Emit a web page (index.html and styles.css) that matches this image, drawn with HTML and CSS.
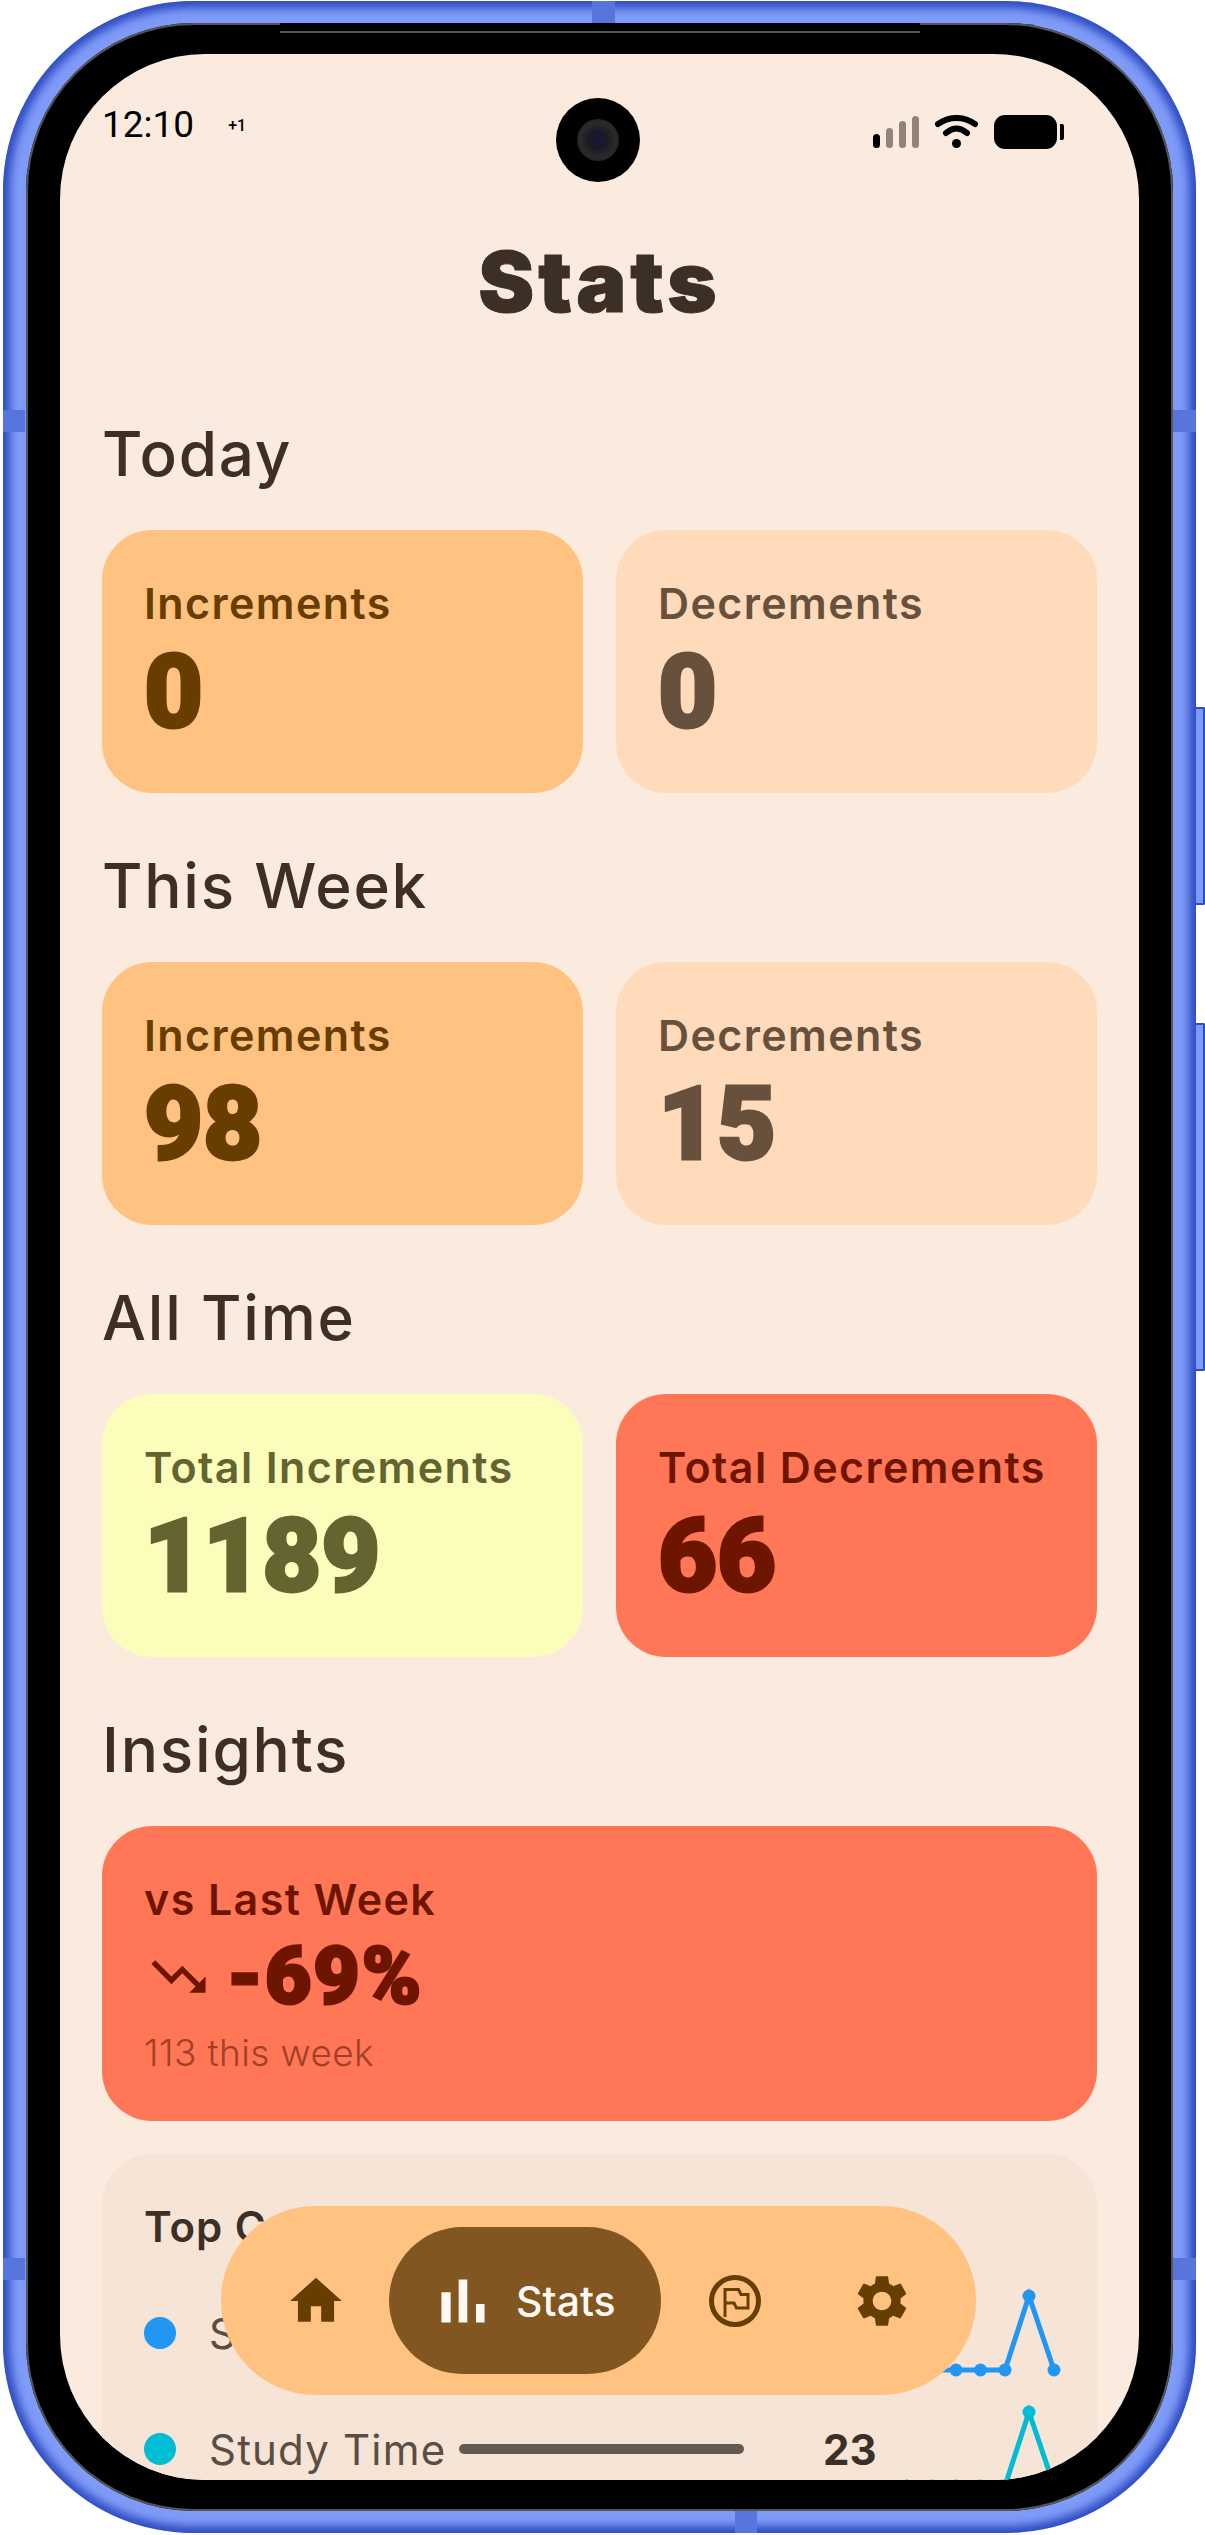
FILE: index.html
```html
<!DOCTYPE html>
<html lang="en">
<head>
    <meta charset="UTF-8">
    <title>Stats</title>
    <link rel="stylesheet" href="styles.css">
</head>
<body>

    <div class="phone">
        <div class="side-btn side-btn-one"></div>
        <div class="side-btn side-btn-two"></div>
        <div class="seam seam-top"></div>
        <div class="seam seam-bottom"></div>
        <div class="seam seam-left-a"></div>
        <div class="seam seam-right-a"></div>
        <div class="seam seam-left-b"></div>
        <div class="seam seam-right-b"></div>

        <div class="bezel">
            <div class="notch"></div>
            <div class="screen">
                <div class="camera"><div class="lens"></div></div>

                <div class="status-bar">
                    <div class="status-left">
                        <span class="clock">12:10</span>
                        <span class="plus-one">+1</span>
                    </div>
                    <div class="status-right">
                        <div class="signal">
                            <span class="sig sig-1"></span>
                            <span class="sig sig-2"></span>
                            <span class="sig sig-3"></span>
                            <span class="sig sig-4"></span>
                        </div>
                        <svg class="wifi" viewBox="0 0 43 33" width="43" height="33">
                            <path d="M3 9 Q21.5 -3 40 9" fill="none" stroke="#000" stroke-width="6" stroke-linecap="round"/>
                            <path d="M11 18 Q21.5 9 32 18" fill="none" stroke="#000" stroke-width="6" stroke-linecap="round"/>
                            <circle cx="21.5" cy="28.5" r="4.5" fill="#000"/>
                        </svg>
                        <div class="battery"><div class="battery-tip"></div></div>
                    </div>
                </div>

                <h1 class="page-title">Stats</h1>

                <h2 class="section-title section-first">Today</h2>
                <div class="card-row">
                    <div class="card card-inc">
                        <div class="card-label">Increments</div>
                        <div class="card-value">0</div>
                    </div>
                    <div class="card card-dec">
                        <div class="card-label">Decrements</div>
                        <div class="card-value">0</div>
                    </div>
                </div>

                <h2 class="section-title">This Week</h2>
                <div class="card-row">
                    <div class="card card-inc">
                        <div class="card-label">Increments</div>
                        <div class="card-value">98</div>
                    </div>
                    <div class="card card-dec">
                        <div class="card-label">Decrements</div>
                        <div class="card-value">15</div>
                    </div>
                </div>

                <h2 class="section-title">All Time</h2>
                <div class="card-row">
                    <div class="card card-total-inc">
                        <div class="card-label">Total Increments</div>
                        <div class="card-value">1189</div>
                    </div>
                    <div class="card card-red">
                        <div class="card-label">Total Decrements</div>
                        <div class="card-value">66</div>
                    </div>
                </div>

                <h2 class="section-title">Insights</h2>
                <div class="card card-red card-wide">
                    <div class="card-label">vs Last Week</div>
                    <div class="trend-row">
                        <svg class="trend-icon" viewBox="0 0 24 24" width="65" height="65">
                            <path d="M16 18l2.29-2.29-4.88-4.88-4 4L2 7.41 3.41 6l6 6 4-4 6.3 6.29L22 12v6z"/>
                        </svg>
                        <span class="trend-value">-69%</span>
                    </div>
                    <div class="trend-note">113 this week</div>
                </div>

                <div class="top-card">
                    <div class="top-title">Top Counters</div>

                    <div class="top-row">
                        <span class="dot dot-blue"></span>
                        <span class="top-name">Steps</span>
                        <span class="top-bar"></span>
                        <span class="top-count">64</span>
                        <svg class="spark spark-blue" viewBox="0 0 170 96" width="170" height="96">
                            <polyline points="12,85 36.5,85 61,85 85.5,85 110,85 134,11 159,85"/>
                            <circle cx="12" cy="85" r="6.5"/><circle cx="36.5" cy="85" r="6.5"/><circle cx="61" cy="85" r="6.5"/><circle cx="85.5" cy="85" r="6.5"/><circle cx="110" cy="85" r="6.5"/><circle cx="134" cy="11" r="6.5"/><circle cx="159" cy="85" r="6.5"/>
                        </svg>
                    </div>

                    <div class="top-row">
                        <span class="dot dot-cyan"></span>
                        <span class="top-name">Study Time</span>
                        <span class="top-bar"></span>
                        <span class="top-count">23</span>
                        <svg class="spark spark-cyan" viewBox="0 0 170 96" width="170" height="96">
                            <polyline points="12,85 36.5,85 61,85 85.5,85 110,85 134,11 159,85"/>
                            <circle cx="12" cy="85" r="6.5"/><circle cx="36.5" cy="85" r="6.5"/><circle cx="61" cy="85" r="6.5"/><circle cx="85.5" cy="85" r="6.5"/><circle cx="110" cy="85" r="6.5"/><circle cx="134" cy="11" r="6.5"/><circle cx="159" cy="85" r="6.5"/>
                        </svg>
                    </div>
                </div>

                <div class="nav-pill">
                    <svg class="nav-icon nav-home" viewBox="0 0 24 24" width="62" height="62">
                        <path d="M10 20v-6h4v6h5v-8h3L12 3 2 12h3v8z"/>
                    </svg>
                    <div class="nav-active">
                        <svg class="nav-bars" viewBox="0 0 24 24" width="74" height="74">
                            <path d="M5 9.2h3V19H5zM10.6 5h2.8v14h-2.8zM16.2 13H19v6h-2.8z"/>
                        </svg>
                        <span class="nav-label">Stats</span>
                    </div>
                    <svg class="nav-flag" viewBox="0 0 52 52" width="52" height="52">
                        <circle cx="26" cy="26" r="23.5"/>
                        <path d="M16 42V14.500H29.500L32 19.500H39V33H27.500L25 28H16"/>
                    </svg>
                    <svg class="nav-icon nav-gear" viewBox="0 0 24 24" width="62" height="62">
                        <path d="M19.14 12.94c.04-.3.06-.61.06-.94 0-.32-.02-.64-.07-.94l2.03-1.58c.18-.14.23-.41.12-.61l-1.92-3.32c-.12-.22-.37-.29-.59-.22l-2.39.96c-.5-.38-1.03-.7-1.62-.94l-.36-2.54c-.04-.24-.24-.41-.48-.41h-3.84c-.24 0-.43.17-.47.41l-.36 2.54c-.59.24-1.13.57-1.62.94l-2.39-.96c-.22-.08-.47 0-.59.22L2.74 8.87c-.12.21-.08.47.12.61l2.03 1.58c-.05.3-.09.63-.09.94s.02.64.07.94l-2.03 1.58c-.18.14-.23.41-.12.61l1.92 3.32c.12.22.37.29.59.22l2.39-.96c.5.38 1.03.7 1.62.94l.36 2.54c.05.24.24.41.48.41h3.84c.24 0 .44-.17.47-.41l.36-2.54c.59-.24 1.13-.56 1.62-.94l2.39.96c.22.08.47 0 .59-.22l1.92-3.32c.12-.22.07-.47-.12-.61l-2.01-1.58zM12 15.6c-1.98 0-3.6-1.62-3.6-3.6s1.62-3.6 3.6-3.6 3.6 1.62 3.6 3.6-1.62 3.6-3.6 3.6z"/>
                    </svg>
                </div>
            </div>
        </div>
    </div>

</body>
</html>
```

FILE: styles.css
```css
html, body {
    margin: 0;
    height: 2535px;
    overflow: hidden;
    background: #fff;
}

body {
    font-family: "Inter", "Liberation Sans", sans-serif;
    color: #3b2f26;
    padding: 1px 0 0 3px;
    box-sizing: border-box;
}

/* device frame */
.phone {
    position: relative;
    width: 1193px;
    height: 2532px;
    box-sizing: border-box;
    padding: 22px 23px;
    border-radius: 190px;
    background: #7f9bf8;
    box-shadow: inset 0 0 9px 7px #2f4dc2;
}

.bezel {
    position: relative;
    height: 100%;
    box-sizing: border-box;
    padding: 31px 34px;
    border-radius: 168px;
    background: #000;
    box-shadow: inset 0 0 0 2px #555;
}

.notch {
    position: absolute;
    top: 0;
    left: 254px;
    width: 640px;
    height: 8px;
    background: #000;
    border-bottom: 2px solid #555;
}

.side-btn {
    position: absolute;
    left: 1193px;
    width: 9px;
    background: #7f9bf8;
    border: 2px solid #2f4dc2;
    border-left: none;
    box-sizing: border-box;
    border-radius: 0 2px 2px 0;
}

.side-btn-one {
    top: 706px;
    height: 198px;
}

.side-btn-two {
    top: 1022px;
    height: 348px;
}

.seam {
    position: absolute;
    background: #5775dc;
}

.seam-top {
    top: 0;
    left: 589px;
    width: 23px;
    height: 22px;
}

.seam-bottom {
    bottom: 0;
    left: 732px;
    width: 22px;
    height: 22px;
}

.seam-left-a, .seam-left-b {
    left: 0;
    width: 22px;
    height: 22px;
}

.seam-right-a, .seam-right-b {
    right: 0;
    width: 23px;
    height: 22px;
}

.seam-left-a, .seam-right-a {
    top: 409px;
}

.seam-left-b, .seam-right-b {
    top: 2257px;
}

/* screen */
.screen {
    position: relative;
    height: 100%;
    overflow: hidden;
    box-sizing: border-box;
    padding: 50px 42px 0;
    border-radius: 145px;
    background: #fbebdf;
}

.camera {
    position: absolute;
    top: 44px;
    left: 496px;
    width: 84px;
    height: 84px;
    border-radius: 50%;
    background: #000;
    display: flex;
    align-items: center;
    justify-content: center;
}

.lens {
    width: 42px;
    height: 42px;
    border-radius: 50%;
    background: radial-gradient(circle, #14163f 0%, #1a1a26 30%, #2b2b2b 60%, #111 100%);
}

.status-bar {
    display: flex;
    justify-content: space-between;
    align-items: center;
    height: 42px;
}

.status-left {
    display: flex;
    align-items: center;
    gap: 34px;
}

.clock {
    font-family: Roboto, sans-serif;
    font-size: 37px;
    color: #000;
    line-height: 42px;
}

.plus-one {
    font-family: Roboto, sans-serif;
    font-size: 16px;
    font-weight: 500;
    color: #000;
}

.status-right {
    display: flex;
    align-items: flex-end;
    margin-right: 40px;
    margin-top: 12px;
}

.signal {
    display: flex;
    align-items: flex-end;
    gap: 6px;
}

.sig {
    width: 7px;
    border-radius: 4px;
    background: #908479;
}

.sig-1 {
    height: 14px;
    background: #000;
}

.sig-2 {
    height: 20px;
}

.sig-3 {
    height: 27px;
}

.sig-4 {
    height: 32px;
}

.wifi {
    margin-left: 16px;
}

.battery {
    position: relative;
    width: 63px;
    height: 34px;
    margin-left: 16px;
    margin-bottom: -1px;
    border-radius: 11px;
    background: #000;
}

.battery-tip {
    position: absolute;
    right: -7px;
    top: 9px;
    width: 4px;
    height: 16px;
    border-radius: 0 2px 2px 0;
    background: #000;
}

.page-title {
    margin: 86px 0 0;
    text-align: center;
    font-family: "Inter", sans-serif;
    font-weight: 900;
    font-size: 84px;
    line-height: 100px;
    letter-spacing: 4px;
    -webkit-text-stroke: 1px currentColor;
}

.section-title {
    margin: 58px 0 41px;
    font-size: 62px;
    font-weight: 550;
    line-height: 70px;
    letter-spacing: 1.8px;
    color: #3b2f26;
}

.section-first {
    margin-top: 87px;
}

.card-row {
    display: grid;
    grid-template-columns: 1fr 1fr;
    gap: 33px;
}

.card {
    height: 263px;
    box-sizing: border-box;
    padding: 50px 42px 0;
    border-radius: 50px;
}

.card-label {
    font-size: 43px;
    font-weight: 600;
    line-height: 46px;
    letter-spacing: 1.4px;
}

.card-value {
    margin-top: 16px;
    font-family: Roboto, sans-serif;
    font-size: 102px;
    font-weight: 900;
    line-height: 100px;
    -webkit-text-stroke: 3px currentColor;
}

.card-inc {
    background: #ffc280;
    color: #673d00;
}

.card-dec {
    background: #ffdbbb;
    color: #67503c;
}

.card-total-inc {
    background: #fbfdbb;
    color: #63642f;
}

.card-red {
    background: #ff7757;
    color: #6e1500;
}

.card-wide {
    height: 295px;
}

.trend-row {
    display: flex;
    align-items: center;
    gap: 16px;
    height: 80px;
    margin-top: 14px;
}

.trend-icon {
    margin-left: 2px;
    fill: #6e1500;
}

.trend-value {
    font-family: Roboto, sans-serif;
    font-size: 80px;
    font-weight: 900;
    line-height: 80px;
    letter-spacing: 2px;
    -webkit-text-stroke: 3px currentColor;
}

.trend-note {
    margin-top: 15px;
    font-size: 37px;
    font-weight: 300;
    line-height: 44px;
    letter-spacing: .4px;
    color: #a23f26;
}

/* top counters, runs off the bottom of the screen */
.top-card {
    margin-top: 33px;
    height: 500px;
    box-sizing: border-box;
    padding: 50px 31px 0 42px;
    border-radius: 50px;
    background: #f6e4d6;
}

.top-title {
    font-size: 42px;
    font-weight: 600;
    line-height: 46px;
    margin-bottom: 25px;
    letter-spacing: 1px;
}

.top-row {
    display: flex;
    align-items: center;
    height: 116px;
}

.dot {
    flex: none;
    width: 32px;
    height: 32px;
    border-radius: 50%;
    margin-right: 33px;
}

.dot-blue {
    background: #2196f3;
}

.dot-cyan {
    background: #00bcd4;
}

.top-name {
    flex: none;
    width: 250px;
    font-size: 42px;
    letter-spacing: 1.2px;
    color: #5a4e44;
}

.top-bar {
    flex: none;
    width: 285px;
    height: 10px;
    border-radius: 5px;
    background: #625b52;
}

.top-count {
    flex: none;
    width: 72px;
    margin-left: 79px;
    font-size: 42px;
    font-weight: 700;
}

.spark {
    flex: none;
}

.spark polyline {
    fill: none;
    stroke-width: 5;
}

.spark-blue polyline {
    stroke: #2196f3;
}

.spark-blue circle {
    fill: #2196f3;
}

.spark-cyan polyline {
    stroke: #00bcd4;
}

.spark-cyan circle {
    fill: #00bcd4;
}

/* floating nav */
.nav-pill {
    position: absolute;
    left: 161px;
    top: 2152px;
    width: 755px;
    height: 189px;
    border-radius: 95px;
    background: #ffc280;
    display: flex;
    align-items: center;
}

.nav-icon {
    flex: none;
    fill: #663e00;
}

.nav-home {
    margin-left: 64px;
}

.nav-active {
    flex: none;
    display: flex;
    align-items: center;
    width: 272px;
    height: 147px;
    margin-left: 42px;
    box-sizing: border-box;
    padding-left: 37px;
    border-radius: 74px;
    background: #815620;
}

.nav-bars {
    flex: none;
    fill: #fff8f3;
}

.nav-label {
    margin-left: 16px;
    font-size: 41px;
    font-weight: 500;
    color: #fff8f3;
}

.nav-flag {
    flex: none;
    margin-left: 48px;
    fill: none;
    stroke: #663e00;
}

.nav-flag circle {
    stroke-width: 5;
}

.nav-flag path {
    stroke-width: 3;
}

.nav-gear {
    margin-left: 90px;
}
```
